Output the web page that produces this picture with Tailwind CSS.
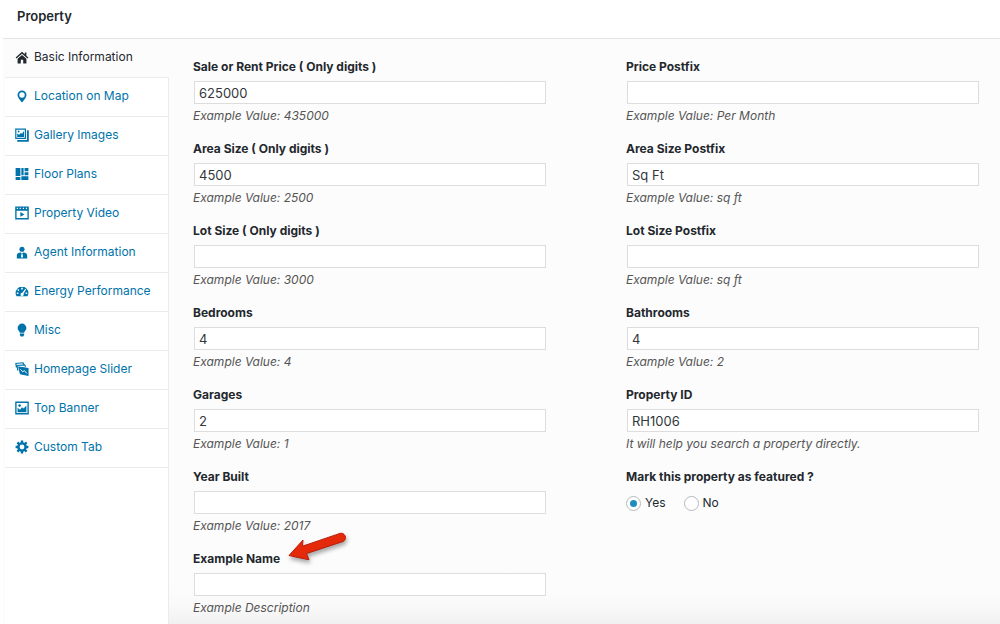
<!DOCTYPE html>
<html lang="en">
<head>
<meta charset="utf-8">
<meta name="viewport" content="width=device-width, initial-scale=1">
<title>Property</title>
<script src="https://cdn.jsdelivr.net/npm/@tailwindcss/browser@4"></script>
</head>
<body class="bg-white font-['Inter','Liberation_Sans',sans-serif] text-xs leading-5 text-[#23282d]">
<div class="ml-[3px] flex min-h-screen flex-col">
  <header class="border-b border-[#e2e4e7] px-3.5 pt-1.5 pb-3">
    <h1 class="text-[13px] leading-5 font-semibold">Property</h1>
  </header>
  <div class="flex flex-1 bg-[#fcfcfc]">
    <nav class="flex w-[166px] shrink-0 flex-col pl-0.5" aria-label="Property sections">
      <a href="#" aria-current="page" class="flex h-[39px] items-center gap-1 border-b border-[#ebebeb] pb-0.5 pl-[9px] text-[#23282d]">
        <svg class="size-4" viewBox="0 0 20 20" fill="currentColor"><path d="M10 3.500 2 10.700l1.100 1.200L10 5.800l6.900 6.100 1.100-1.200-2.500-2.200V4.500h-2v2.200z"/><path d="M10 7.500 4.500 12.300V18H8.500v-4.500h3V18h4v-5.700z"/></svg>Basic Information</a>
      <a href="#" class="flex h-[39px] items-center gap-1 border-r border-b border-[#ebebeb] bg-white pb-0.5 pl-[9px] text-[#0073aa]">
        <svg class="size-4" viewBox="0 0 20 20" fill="currentColor"><path fill-rule="evenodd" d="M10 3a5.600 5.600 0 0 0-5.600 5.600C4.400 12 7 14 10 18c3-4 5.600-6 5.600-9.400A5.600 5.600 0 0 0 10 3zm0 2.400a3.400 3.400 0 1 1 0 6.800 3.400 3.400 0 0 1 0-6.800z"/></svg>Location on Map</a>
      <a href="#" class="flex h-[39px] items-center gap-1 border-r border-b border-[#ebebeb] bg-white pb-0.5 pl-[9px] text-[#0073aa]">
        <svg class="size-4" viewBox="0 0 20 20" fill="currentColor"><path fill-rule="evenodd" d="M1.500 2h13.500v13H1.500zM3 3.500v10h10.500v-10z"/><path d="M4 12.500V8l2.500 1.800L8.500 7.500l1.500 1L12.500 5v7.500z"/><circle cx="5.800" cy="5.700" r="1.200"/><path d="M16.200 4H18.500v14.500H4v-2.300h12.200z"/></svg>Gallery Images</a>
      <a href="#" class="flex h-[39px] items-center gap-1 border-r border-b border-[#ebebeb] bg-white pb-0.5 pl-[9px] text-[#0073aa]">
        <svg class="size-4" viewBox="0 0 20 20" fill="currentColor"><path d="M2 2.500h6v10H2zM2 13.700h6V17.500H2zM9.200 2.500H12v9H9.200zM13.200 2.500H18v4h-4.800zM13.200 7.700H18v3.800h-4.800zM9.200 12.700H18v4.800H9.200z"/></svg>Floor Plans</a>
      <a href="#" class="flex h-[39px] items-center gap-1 border-r border-b border-[#ebebeb] bg-white pb-0.5 pl-[9px] text-[#0073aa]">
        <svg class="size-4" viewBox="0 0 20 20" fill="currentColor"><path fill-rule="evenodd" d="M1.500 2h17v16h-17zM3.200 7.200v9.200h13.600V7.200zM3.500 3.500V5H5V3.500zm3.500 0V5h1.500V3.500zm4 0V5h1.500V3.500zm3.800 0V5h1.500V3.500z"/><path d="m8 8.800 5 3-5 3z"/></svg>Property Video</a>
      <a href="#" class="flex h-[39px] items-center gap-1 border-r border-b border-[#ebebeb] bg-white pb-0.5 pl-[9px] text-[#0073aa]">
        <svg class="size-4" viewBox="0 0 20 20" fill="currentColor"><circle cx="10" cy="6.500" r="3.200"/><path fill-rule="evenodd" d="M3.500 18v-3.500c0-2.500 2-3.800 4.800-3.800L10 12.200l1.700-1.500c2.800 0 4.800 1.300 4.800 3.800V18zM9.300 12.500l-.6 3.500L10 17.500l1.300-1.500-.6-3.500z"/></svg>Agent Information</a>
      <a href="#" class="flex h-[39px] items-center gap-1 border-r border-b border-[#ebebeb] bg-white pb-0.5 pl-[9px] text-[#0073aa]">
        <svg class="size-4" viewBox="0 0 20 20" fill="currentColor"><path fill-rule="evenodd" d="M10 4.500a8 8 0 0 0-8 8c0 1.500.5 3 1.300 4h13.400c.8-1 1.300-2.500 1.300-4a8 8 0 0 0-8-8zM9 6h2v2H9zM5.300 7.500l1.400 1.400-1.300 1.300L4 8.900zM3.500 12h2v1.800h-2zM14.500 12h2v1.800h-2zM14.300 7.200l.9.700-3.200 5.600a2 2 0 1 1-1.700-1.300z"/></svg>Energy Performance</a>
      <a href="#" class="flex h-[39px] items-center gap-1 border-r border-b border-[#ebebeb] bg-white pb-0.5 pl-[9px] text-[#0073aa]">
        <svg class="size-4" viewBox="0 0 20 20" fill="currentColor"><path d="M10 2a5.500 5.500 0 0 0-5.500 5.500c0 2.700 2.300 3.700 2.800 6h5.400c.5-2.300 2.800-3.300 2.800-6A5.500 5.500 0 0 0 10 2zM7.300 14.500h5.400v1.800L11.500 18h-3l-1.200-1.700z"/></svg>Misc</a>
      <a href="#" class="flex h-[39px] items-center gap-1 border-r border-b border-[#ebebeb] bg-white pb-0.5 pl-[9px] text-[#0073aa]">
        <svg class="size-4" viewBox="0 0 20 20" fill="none" stroke="currentColor" stroke-width="1.400"><path d="M3 8 2.300 3l9-.8 1 2M4.800 12 3.800 5.700l9.700-.9.900 2.500"/><path fill="currentColor" d="m6 7.500 11.500 1.700v8.600L8 16z"/><path stroke="#fff" stroke-width="1.200" d="m8 10.500 3 3 2-1.500 3 3.500"/></svg>Homepage Slider</a>
      <a href="#" class="flex h-[39px] items-center gap-1 border-r border-b border-[#ebebeb] bg-white pb-0.5 pl-[9px] text-[#0073aa]">
        <svg class="size-4" viewBox="0 0 20 20" fill="currentColor"><path fill-rule="evenodd" d="M1.500 2h17v16h-17zM3.200 3.700v12.600h13.600V3.700z"/><path d="M4.500 15.200V9.700l3 2.500L10 9.200l2 1.500L15.500 7v8.200z"/><circle cx="7" cy="7" r="1.600"/></svg>Top Banner</a>
      <a href="#" class="flex h-[39px] items-center gap-1 border-r border-b border-[#ebebeb] bg-white pb-0.5 pl-[9px] text-[#0073aa]">
        <svg class="size-4" viewBox="0 0 20 20" fill="none" stroke="currentColor"><circle cx="10" cy="10" r="4.500" stroke-width="3"/><path stroke-width="3" d="M10 2v3M10 15v3M2 10h3M15 10h3M4.300 4.300l2 2M13.700 13.700l2 2M15.700 4.300l-2 2M6.300 13.700l-2 2"/></svg>Custom Tab</a>
      <div class="flex-1 border-r border-[#ebebeb] bg-white"></div>
    </nav>
    <form class="grid flex-1 grid-cols-2 content-start gap-x-20 gap-y-[13px] bg-linear-to-t from-[#f1f1f1] via-[#f9f9f9] via-3% to-[#fcfcfc] to-6% pt-[18px] pr-[21px] pl-6">
      <div>
        <label for="price" class="block font-bold">Sale or Rent Price ( Only digits )</label>
        <div class="mt-1 pl-px"><input id="price" value="625000" class="block h-[23px] w-full border border-[#dddddd] bg-white px-1 text-[13px] text-[#32373c]"></div>
        <p class="mt-0.5 text-[#555555] italic">Example Value: 435000</p>
      </div>
      <div>
        <label for="price-postfix" class="block font-bold">Price Postfix</label>
        <div class="mt-1 pl-px"><input id="price-postfix" class="block h-[23px] w-full border border-[#dddddd] bg-white px-1 text-[13px] text-[#32373c]"></div>
        <p class="mt-0.5 text-[#555555] italic">Example Value: Per Month</p>
      </div>
      <div>
        <label for="area" class="block font-bold">Area Size ( Only digits )</label>
        <div class="mt-1 pl-px"><input id="area" value="4500" class="block h-[23px] w-full border border-[#dddddd] bg-white px-1 text-[13px] text-[#32373c]"></div>
        <p class="mt-0.5 text-[#555555] italic">Example Value: 2500</p>
      </div>
      <div>
        <label for="area-postfix" class="block font-bold">Area Size Postfix</label>
        <div class="mt-1 pl-px"><input id="area-postfix" value="Sq Ft" class="block h-[23px] w-full border border-[#dddddd] bg-white px-1 text-[13px] text-[#32373c]"></div>
        <p class="mt-0.5 text-[#555555] italic">Example Value: sq ft</p>
      </div>
      <div>
        <label for="lot" class="block font-bold">Lot Size ( Only digits )</label>
        <div class="mt-1 pl-px"><input id="lot" class="block h-[23px] w-full border border-[#dddddd] bg-white px-1 text-[13px] text-[#32373c]"></div>
        <p class="mt-0.5 text-[#555555] italic">Example Value: 3000</p>
      </div>
      <div>
        <label for="lot-postfix" class="block font-bold">Lot Size Postfix</label>
        <div class="mt-1 pl-px"><input id="lot-postfix" class="block h-[23px] w-full border border-[#dddddd] bg-white px-1 text-[13px] text-[#32373c]"></div>
        <p class="mt-0.5 text-[#555555] italic">Example Value: sq ft</p>
      </div>
      <div>
        <label for="bedrooms" class="block font-bold">Bedrooms</label>
        <div class="mt-1 pl-px"><input id="bedrooms" value="4" class="block h-[23px] w-full border border-[#dddddd] bg-white px-1 text-[13px] text-[#32373c]"></div>
        <p class="mt-0.5 text-[#555555] italic">Example Value: 4</p>
      </div>
      <div>
        <label for="bathrooms" class="block font-bold">Bathrooms</label>
        <div class="mt-1 pl-px"><input id="bathrooms" value="4" class="block h-[23px] w-full border border-[#dddddd] bg-white px-1 text-[13px] text-[#32373c]"></div>
        <p class="mt-0.5 text-[#555555] italic">Example Value: 2</p>
      </div>
      <div>
        <label for="garages" class="block font-bold">Garages</label>
        <div class="mt-1 pl-px"><input id="garages" value="2" class="block h-[23px] w-full border border-[#dddddd] bg-white px-1 text-[13px] text-[#32373c]"></div>
        <p class="mt-0.5 text-[#555555] italic">Example Value: 1</p>
      </div>
      <div>
        <label for="property-id" class="block font-bold">Property ID</label>
        <div class="mt-1 pl-px"><input id="property-id" value="RH1006" class="block h-[23px] w-full border border-[#dddddd] bg-white px-1 text-[13px] text-[#32373c]"></div>
        <p class="mt-0.5 text-[#555555] italic">It will help you search a property directly.</p>
      </div>
      <div>
        <label for="year" class="block font-bold">Year Built</label>
        <div class="mt-1 pl-px"><input id="year" class="block h-[23px] w-full border border-[#dddddd] bg-white px-1 text-[13px] text-[#32373c]"></div>
        <p class="mt-0.5 text-[#555555] italic">Example Value: 2017</p>
      </div>
      <fieldset>
        <legend class="font-bold">Mark this property as featured ?</legend>
        <div class="mt-1.5 flex gap-[18px]">
          <label class="flex items-center gap-1"><input type="radio" name="featured" checked class="grid size-[15px] appearance-none place-items-center rounded-full border border-[#b4b9be] bg-white before:size-[7px] before:rounded-full checked:before:bg-[#1e8cbe]">Yes</label>
          <label class="flex items-center gap-1"><input type="radio" name="featured" class="grid size-[15px] appearance-none place-items-center rounded-full border border-[#b4b9be] bg-white before:size-[7px] before:rounded-full checked:before:bg-[#1e8cbe]">No</label>
        </div>
      </fieldset>
      <div>
        <div class="relative w-fit">
          <label for="example" class="block font-bold">Example Name</label>
          <svg class="absolute bottom-0.5 left-full ml-1.5 h-9 w-16 overflow-visible drop-shadow-[1px_3px_2px_rgb(0_0_0/0.35)]" viewBox="0 0 64 36" fill="#e42a0a" stroke="#b81c08" stroke-linejoin="round"><path d="M3 24.500 17 9l-.5 6.200L54 2.400c4.500-1.200 8 5 3.200 8L20.500 22.500l2.500 6.300z"/></svg>
        </div>
        <div class="mt-1 pl-px"><input id="example" class="block h-[23px] w-full border border-[#dddddd] bg-white px-1 text-[13px] text-[#32373c]"></div>
        <p class="mt-0.5 text-[#555555] italic">Example Description</p>
      </div>
    </form>
  </div>
</div>
</body>
</html>
